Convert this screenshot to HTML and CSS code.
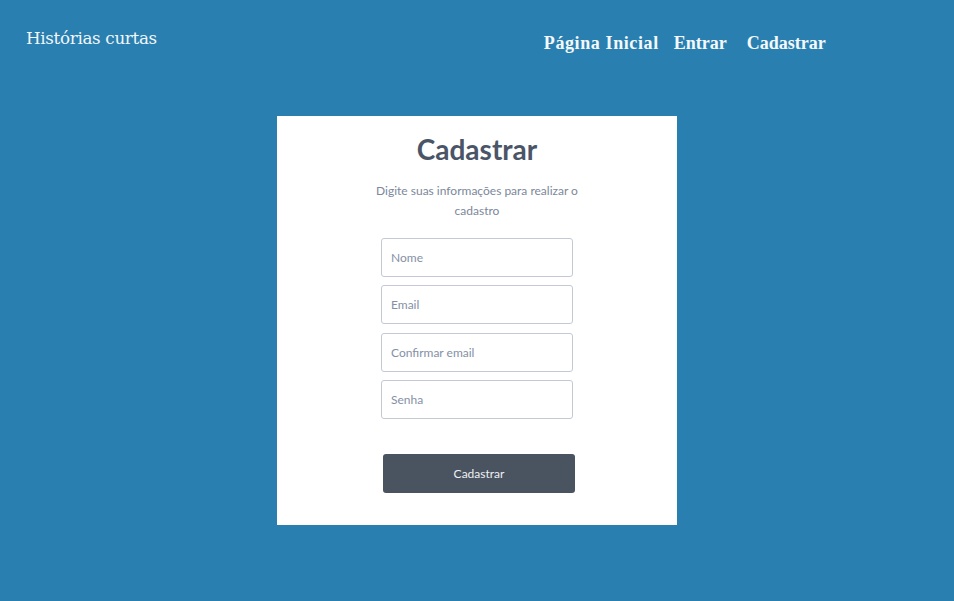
FILE: index.html
```html
<!DOCTYPE html>
<html lang="pt">
<head>
<meta charset="utf-8">
<title>Cadastrar</title>
<link rel="stylesheet" href="styles.css">
</head>
<body>
<header class="topbar">
  <div class="brand">Histórias curtas</div>
  <nav class="nav">
    <a href="#" class="nav-link nav-home">Página Inicial</a>
    <a href="#" class="nav-link nav-login">Entrar</a>
    <a href="#" class="nav-link">Cadastrar</a>
  </nav>
</header>
<main class="main">
  <section class="card">
    <h1 class="title">Cadastrar</h1>
    <p class="subtitle">Digite suas informações para realizar o cadastro</p>
    <form class="form">
      <input class="field" type="text" placeholder="Nome">
      <input class="field" type="email" placeholder="Email">
      <input class="field" type="email" placeholder="Confirmar email">
      <input class="field" type="password" placeholder="Senha">
      <button class="btn" type="button">Cadastrar</button>
    </form>
  </section>
</main>
</body>
</html>
```
FILE: styles.css
```css
* { box-sizing: border-box; }
html, body { margin: 0; padding: 0; }
body {
  background: #2980b0;
  width: 954px;
  height: 601px;
  overflow: hidden;
  font-family: Lato, "Liberation Sans", sans-serif;
}
.topbar {
  display: flex;
  align-items: flex-start;
  padding: 27px 0 0 26px;
  height: 116px;
}
.brand {
  font-family: "DejaVu Serif", serif;
  font-size: 16.7px;
  color: #f2f6fa;
  line-height: 22px;
  letter-spacing: -0.3px;
}
.nav {
  display: flex;
  margin-left: 387px;
  padding-top: 4px;
}
.nav-link {
  font-family: "Liberation Serif", serif;
  font-weight: bold;
  font-size: 18px;
  color: #f5f8fb;
  text-decoration: none;
  line-height: 24px;
}
.nav-home { letter-spacing: 0.6px; margin-right: 15px; }
.nav-login { margin-right: 20px; }
.main {
  display: flex;
  justify-content: center;
}
.card {
  width: 400px;
  height: 409px;
  background: #fff;
  display: flex;
  flex-direction: column;
  align-items: center;
  padding-top: 16px;
}
.title {
  margin: 0;
  font-size: 28px;
  font-weight: bold;
  color: #4a5568;
  line-height: 34px;
}
.subtitle {
  margin: 15px 0 0;
  width: 210px;
  text-align: center;
  font-size: 12px;
  line-height: 19.5px;
  color: #7c879b;
}
.form {
  margin-top: 18px;
  display: flex;
  flex-direction: column;
  align-items: center;
  width: 192px;
}
.field {
  width: 192px;
  height: 39px;
  border: 1px solid #c3cad6;
  border-radius: 3px;
  padding: 0 9px;
  font-family: Lato, "Liberation Sans", sans-serif;
  font-size: 12px;
  color: #4a5568;
  margin-bottom: 8.3px;
  outline: none;
  background: #fff;
}
.field::placeholder { color: #8590a6; }
.btn {
  margin-top: 27px;
  margin-left: 4px;
  width: 192px;
  height: 39px;
  border: none;
  border-radius: 3px;
  background: #4a5360;
  color: #eef0f3;
  font-family: Lato, "Liberation Sans", sans-serif;
  font-size: 12px;
}
```
